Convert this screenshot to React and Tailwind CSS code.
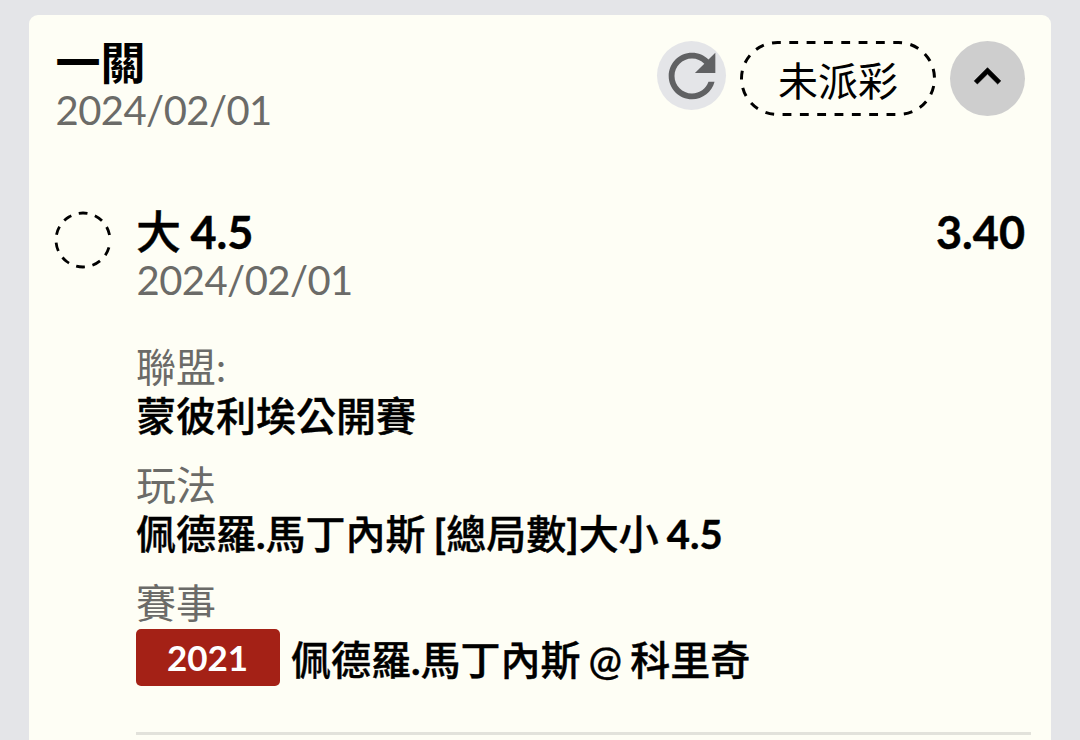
import React from "react";

const RefreshIcon = () => (
  <svg viewBox="0 0 24 24" className="h-[70px] w-[70px] shrink-0 fill-[#606163]">
    <path d="M17.65 6.35C16.2 4.9 14.21 4 12 4c-4.42 0-7.99 3.58-7.99 8s3.57 8 7.99 8c3.73 0 6.84-2.55 7.73-6h-2.08c-.82 2.33-3.04 4-5.65 4-3.31 0-6-2.69-6-6s2.69-6 6-6c1.66 0 3.14.69 4.22 1.78L13 11h7V4l-2.35 2.35z" />
  </svg>
);

const ChevronUpIcon = () => (
  <svg viewBox="0 0 24 24" className="mb-[5px] h-[53px] w-[53px] fill-black stroke-black stroke-[0.3]">
    <path d="M12 8l-6 6 1.41 1.41L12 10.83l4.59 4.58L18 14z" />
  </svg>
);

// Dashed outline around the status label
const PillOutline = () => (
  <svg viewBox="0 0 196 75" className="absolute inset-0 h-full w-full" fill="none">
    <path
      d="M49.3 1.5H158.5A36 36 0 0 1 158.5 73.5H37.5A36 36 0 0 1 37.5 1.5H49.3"
      pathLength="27"
      stroke="black"
      strokeWidth="3"
      strokeDasharray="0.51 0.49"
    />
  </svg>
);

const PendingCircle = () => (
  <svg viewBox="0 0 58 58" className="-ml-[1.5px] h-[58px] w-[58px]" fill="none">
    <path
      d="M54.95 36.44A27 27 0 1 1 55.55 24.08"
      pathLength="333.5"
      stroke="black"
      strokeWidth="2.8"
      strokeDasharray="18.5 16.5"
    />
  </svg>
);

const Detail = ({ label, children }) => (
  <div className="h-[118px]">
    <div className="h-[48px] text-[40px] leading-[48px] text-[#6b6b68]">{label}</div>
    <div className="h-[50px] text-[40px] leading-[50px] font-medium text-black [word-spacing:-2px] [-webkit-text-stroke:0.4px_black]">
      {children}
    </div>
  </div>
);

const App = () => {
  return (
    <div className="h-[740px] overflow-hidden bg-[#e4e5e8] pt-[15px] pr-[29px] pl-[29px] font-[Lato,'Noto_Sans_CJK_TC',sans-serif] whitespace-nowrap">
      <div className="h-[760px] rounded-t-[9px] bg-[#fefef5] pt-[24px] pl-[26px]">
        {/* Header */}
        <div className="flex h-[169px] justify-between pr-[26px]">
          <div className="pl-[0.5px]">
            <div className="h-[48px] text-[45px] leading-[48px] font-bold text-black">一關</div>
            <div className="text-[40px] leading-[46px] tracking-[-0.55px] text-[#6b6b68]">2024/02/01</div>
          </div>
          <div className="flex items-start pt-[2px]">
            <button className="flex h-[69px] w-[69px] items-center justify-center rounded-full bg-[#e4e5e8]">
              <RefreshIcon />
            </button>
            <div className="relative ml-[14px] flex h-[75px] w-[196px] items-center justify-center pt-[5px] text-[40px] leading-[70px] text-black">
              <PillOutline />
              未派彩
            </div>
            <button className="ml-[14px] flex h-[75px] w-[75px] items-center justify-center rounded-full bg-[#cecece]">
              <ChevronUpIcon />
            </button>
          </div>
        </div>

        {/* Selection */}
        <div className="flex">
          <div className="w-[81px] pt-[2.5px]">
            <PendingCircle />
          </div>
          <div className="flex-1">
            <div className="flex h-[48px] justify-between pr-[26px] text-[45px] leading-[48px] font-medium text-black [word-spacing:-2px] [-webkit-text-stroke:0.4px_black]">
              <span>
                大 <span className="font-bold">4.5</span>
              </span>
              <span className="font-bold">3.40</span>
            </div>
            <div className="pl-[0.5px] text-[40px] leading-[48px] tracking-[-0.55px] text-[#6b6b68]">2024/02/01</div>

            <div className="mt-[39px]">
              <Detail label="聯盟:">蒙彼利埃公開賽</Detail>
              <Detail label="玩法">
                佩德羅<b>.</b>馬丁內斯 <b>[</b>總局數<b>]</b>大小 <b>4.5</b>
              </Detail>
              <div className="text-[40px] leading-[48px] text-[#6b6b68]">賽事</div>
              <div className="mt-[2px] flex items-center text-[40px] leading-[57px] font-medium text-black">
                <span className="mr-[11.5px] -ml-[0.5px] h-[57px] w-[144px] rounded-[5px] bg-[#a42116] text-center text-[35px] font-bold text-white">
                  2021
                </span>
                <span className="pt-[6px] leading-[51px] [word-spacing:-2px] [-webkit-text-stroke:0.4px_black]">
                  佩德羅<b>.</b>馬丁內斯 @ 科里奇
                </span>
              </div>
            </div>
            <div className="mt-[46px] mr-[20px] h-[3px] bg-[#e2e2db]" />
          </div>
        </div>
      </div>
    </div>
  );
};

export default App;
